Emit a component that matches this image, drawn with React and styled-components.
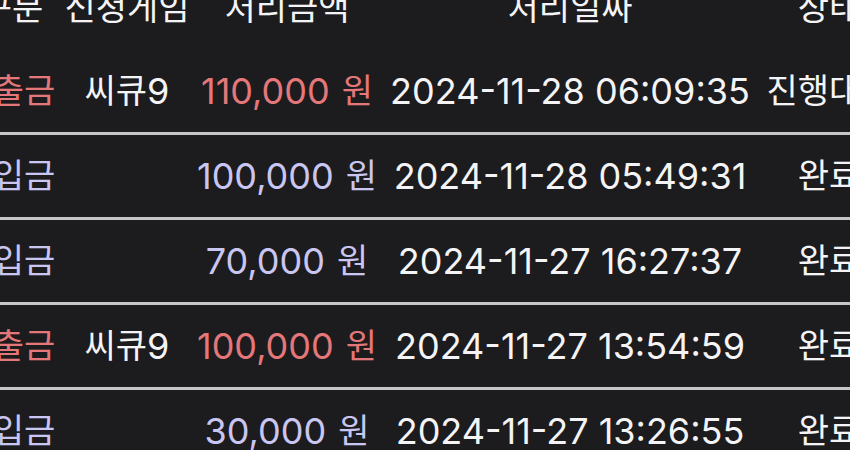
import React from "react";
import styled, { createGlobalStyle } from "styled-components";

const Global = createGlobalStyle`
  html, body { margin: 0; padding: 0; background: #1c1b1d; }
  body { width: 850px; height: 450px; overflow: hidden; }
  #root { width: 850px; }
`;

const Viewport = styled.div`
  width: 850px;
  height: 450px;
  overflow: hidden;
  background: #1c1b1d;
  font-family: Inter, "Noto Sans CJK KR", sans-serif;
  color: #f4f4f6;
`;

const Table = styled.div`
  display: grid;
  grid-template-columns: 68px 138px 182px 384px 134px;
  margin: -32px 0 0 -10px;
  width: 906px;
`;

const HeaderRow = styled.div`
  display: contents;
`;

const HeadCell = styled.div`
  height: 82px;
  box-sizing: border-box;
  padding-bottom: 2px;
  display: flex;
  align-items: center;
  justify-content: center;
  font-size: 34px;
  line-height: 1;
  color: #f4f4f6;
  white-space: nowrap;
  transform: translateX(${(p) => p.$dx || 0}px);
`;

const Row = styled.div`
  display: contents;
`;

const Cell = styled.div`
  height: 85px;
  box-sizing: border-box;
  border-bottom: 3px solid #c6c6c8;
  display: flex;
  align-items: center;
  justify-content: center;
  font-size: 36px;
  line-height: 1;
  white-space: nowrap;
  color: ${(p) =>
    p.$tone === "out" ? "#e47779" : p.$tone === "in" ? "#c9c6f2" : "#f4f4f6"};
`;

const Ko = styled.span`
  font-size: 34px;
  margin-left: ${(p) => (p.$gap ? "12px" : "0")};
`;

const rows = [
  { type: "출금", game: "씨큐", num: "9", amount: "110,000", date: "2024-11-28 06:09:35", status: "진행대기" },
  { type: "입금", game: "", num: "", amount: "100,000", date: "2024-11-28 05:49:31", status: "완료" },
  { type: "입금", game: "", num: "", amount: "70,000", date: "2024-11-27 16:27:37", status: "완료" },
  { type: "출금", game: "씨큐", num: "9", amount: "100,000", date: "2024-11-27 13:54:59", status: "완료" },
  { type: "입금", game: "", num: "", amount: "30,000", date: "2024-11-27 13:26:55", status: "완료" },
];

export default function App() {
  return (
    <>
      <Global />
      <Viewport>
        <Table>
          <HeaderRow>
            <HeadCell $dx={-12}>구분</HeadCell>
            <HeadCell>신청게임</HeadCell>
            <HeadCell>처리금액</HeadCell>
            <HeadCell>처리일짜</HeadCell>
            <HeadCell>상태</HeadCell>
          </HeaderRow>
          {rows.map((r, i) => {
            const tone = r.type === "출금" ? "out" : "in";
            return (
              <Row key={i}>
                <Cell $tone={tone}>
                  <Ko>{r.type}</Ko>
                </Cell>
                <Cell>
                  {r.game && <Ko>{r.game}</Ko>}
                  {r.num}
                </Cell>
                <Cell $tone={tone}>
                  {r.amount}
                  <Ko $gap>원</Ko>
                </Cell>
                <Cell>{r.date}</Cell>
                <Cell>
                  <Ko>{r.status}</Ko>
                </Cell>
              </Row>
            );
          })}
        </Table>
      </Viewport>
    </>
  );
}
